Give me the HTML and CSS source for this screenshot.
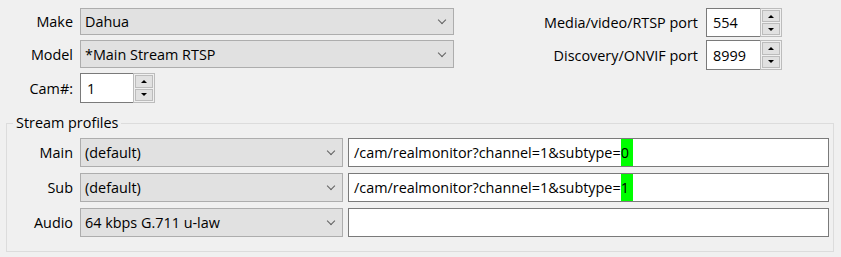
FILE: index.html
```html
<!DOCTYPE html>
<html>
  <head>
    <meta charset="UTF-8" />
    <link rel="stylesheet" href="styles.css">
  </head>

  <body>
    <div class="top">
      <div class="form-left">
        <label class="lbl">Make</label>
        <div class="combo row-make"><span>Dahua</span><span class="chev"></span></div>

        <label class="lbl">Model</label>
        <div class="combo row-model"><span>*Main Stream RTSP</span><span class="chev"></span></div>

        <label class="lbl">Cam#:</label>
        <div class="spin spin-cam">
          <div class="spin-text">1</div>
          <div class="spin-buttons">
            <div class="spin-btn"><span class="arrow up"></span></div>
            <div class="spin-btn"><span class="arrow down"></span></div>
          </div>
        </div>
      </div>

      <div class="form-right">
        <label class="lbl">Media/video/RTSP port</label>
        <div class="spin spin-port">
          <div class="spin-text">554</div>
          <div class="spin-buttons">
            <div class="spin-btn"><span class="arrow up"></span></div>
            <div class="spin-btn"><span class="arrow down"></span></div>
          </div>
        </div>

        <label class="lbl">Discovery/ONVIF port</label>
        <div class="spin spin-port tall">
          <div class="spin-text">8999</div>
          <div class="spin-buttons">
            <div class="spin-btn"><span class="arrow up"></span></div>
            <div class="spin-btn"><span class="arrow down"></span></div>
          </div>
        </div>
      </div>
    </div>

    <fieldset class="group">
      <legend>Stream profiles</legend>
      <div class="profiles">
        <label class="lbl">Main</label>
        <div class="combo"><span>(default)</span><span class="chev"></span></div>
        <div class="textbox">/cam/realmonitor?channel=1&amp;subtype=<span class="hl">0</span></div>

        <label class="lbl">Sub</label>
        <div class="combo"><span>(default)</span><span class="chev"></span></div>
        <div class="textbox">/cam/realmonitor?channel=1&amp;subtype=<span class="hl">1</span></div>

        <label class="lbl">Audio</label>
        <div class="combo"><span>64 kbps G.711 u-law</span><span class="chev"></span></div>
        <div class="textbox"></div>
      </div>
    </fieldset>
  </body>
</html>
```

FILE: styles.css
```css
html {
  font-size: 14.4px;
}

body {
  margin: 0;
  background: #f0f0f0;
  color: #000;
  font-family: "Open Sans", "Noto Sans", sans-serif;
  font-size: 14.4px;
}

.top {
  display: flex;
  align-items: flex-start;
  padding-top: 8px;
}

.lbl {
  text-align: right;
  align-self: center;
  color: #000;
  white-space: nowrap;
}

/* left form: Make / Model / Cam# */
.form-left {
  display: grid;
  grid-template-columns: 73px 374px;
  grid-template-rows: 27px 28px 30px;
  column-gap: 7px;
  row-gap: 5px;
}

/* right form: ports */
.form-right {
  display: grid;
  grid-template-columns: auto 76px;
  grid-template-rows: 29px 30px;
  column-gap: 8px;
  row-gap: 3px;
  margin-left: auto;
  margin-right: 59px;
}

.combo {
  display: flex;
  align-items: center;
  justify-content: space-between;
  background: #e1e1e1;
  border: 1px solid #adadad;
  padding-left: 4px;
  padding-right: 5px;
  box-sizing: border-box;
  height: 100%;
}

.chev {
  width: 5px;
  height: 5px;
  border-right: 1px solid #606060;
  border-bottom: 1px solid #606060;
  transform: rotate(45deg);
  margin-right: 3px;
  margin-top: -3px;
}

.spin {
  display: flex;
  height: 100%;
  box-sizing: border-box;
  background: #fff;
}

.spin-cam {
  width: 75px;
}

.spin-text {
  flex: 1;
  display: flex;
  align-items: center;
  padding-left: 6px;
  border: 1px solid #7a7a7a;
  border-right: none;
}

.spin-buttons {
  width: 18px;
  display: flex;
  flex-direction: column;
  border: 1px solid #bcbcbc;
  background: #f0f0f0;
  padding: 1px;
  gap: 1px;
}

.spin-btn {
  flex: 1;
  background: #e1e1e1;
  border: 1px solid #bcbcbc;
  display: flex;
  align-items: center;
  justify-content: center;
}

.arrow {
  width: 0;
  height: 0;
  border-left: 3px solid transparent;
  border-right: 3px solid transparent;
}

.arrow.up {
  border-bottom: 3px solid #000;
}

.arrow.down {
  border-top: 3px solid #000;
}

/* group box */
.group {
  margin: 10px 7px 0 6px;
  padding: 5px 4px 14px 0;
  border: 1px solid #dcdcdc;
  min-width: 0;
}

.group legend {
  margin-left: 6px;
  padding: 0 3px;
  line-height: 20px;
}

.profiles {
  display: grid;
  grid-template-columns: 73px 263px 1fr;
  grid-auto-rows: 29px;
  row-gap: 6px;
}

.profiles .lbl {
  padding-right: 7px;
}

.textbox {
  margin-left: 5px;
  background: #fff;
  border: 1px solid #7a7a7a;
  padding-left: 5px;
  line-height: 27px;
  white-space: nowrap;
  overflow: hidden;
}

.hl {
  display: inline-block;
  background: #00ff00;
  width: 12px;
}
```
